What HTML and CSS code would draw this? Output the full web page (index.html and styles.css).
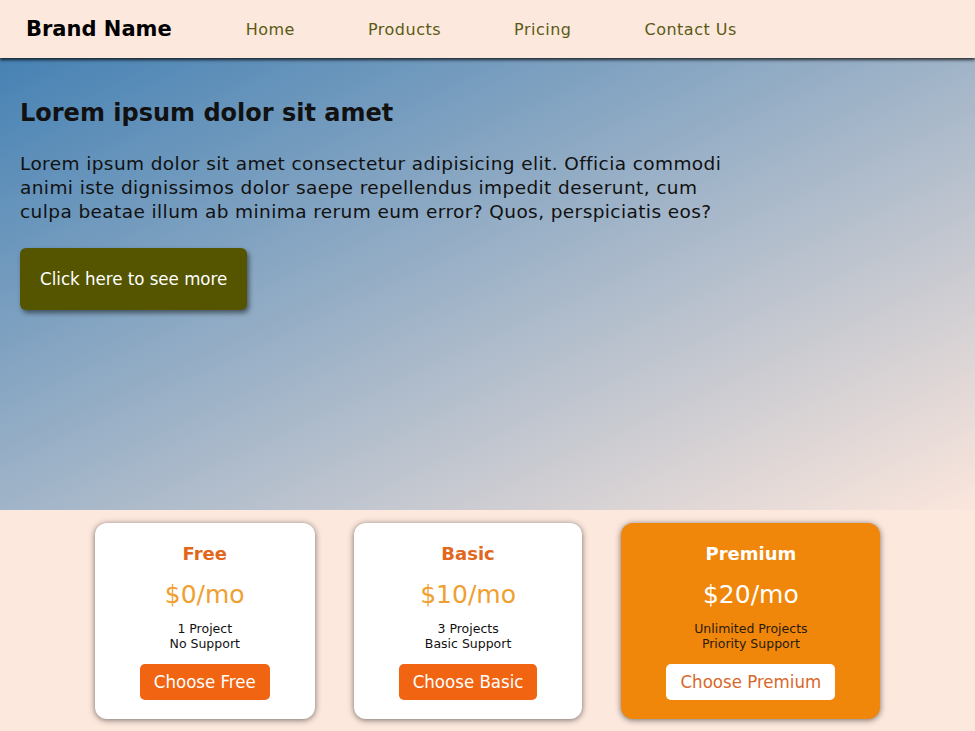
FILE: index.html
```html
<!DOCTYPE html>
<html lang="en">
<head>
<meta charset="utf-8">
<title>Brand Name</title>
<link rel="stylesheet" href="styles.css">
</head>
<body>
<header class="navbar">
  <div class="brand">Brand Name</div>
  <nav class="nav-links">
    <a href="#" class="nav-link">Home</a>
    <a href="#" class="nav-link">Products</a>
    <a href="#" class="nav-link">Pricing</a>
    <a href="#" class="nav-link">Contact Us</a>
  </nav>
</header>
<section class="hero">
  <h1 class="hero-title">Lorem ipsum dolor sit amet</h1>
  <p class="hero-text">Lorem ipsum dolor sit amet consectetur adipisicing elit. Officia commodi animi iste dignissimos dolor saepe repellendus impedit deserunt, cum culpa beatae illum ab minima rerum eum error? Quos, perspiciatis eos?</p>
  <button class="hero-btn">Click here to see more</button>
</section>
<section class="pricing">
  <div class="card">
    <h2 class="card-title">Free</h2>
    <div class="card-price">$0/mo</div>
    <div class="card-features">1 Project<br>No Support</div>
    <button class="card-btn">Choose Free</button>
  </div>
  <div class="card">
    <h2 class="card-title">Basic</h2>
    <div class="card-price">$10/mo</div>
    <div class="card-features">3 Projects<br>Basic Support</div>
    <button class="card-btn">Choose Basic</button>
  </div>
  <div class="card card-premium">
    <h2 class="card-title">Premium</h2>
    <div class="card-price">$20/mo</div>
    <div class="card-features">Unlimited Projects<br>Priority Support</div>
    <button class="card-btn">Choose Premium</button>
  </div>
</section>
</body>
</html>
```
FILE: styles.css
```css
* { box-sizing: border-box; }
html, body { margin: 0; padding: 0; }
body {
  font-family: "DejaVu Sans", Inter, sans-serif;
  background: #fde8dd;
  color: #111;
}
.navbar {
  height: 58px;
  background: #fde8dd;
  display: flex;
  align-items: center;
  padding-left: 26px;
  gap: 74px;
  box-shadow: 0 2px 3px rgba(0,0,0,0.75);
  position: relative;
  z-index: 1;
}
.brand {
  font-weight: 700;
  font-size: 21px;
  color: #000;
}
.nav-links {
  display: flex;
  gap: 73px;
}
.nav-link {
  color: #5a5a14;
  text-decoration: none;
  font-size: 16px;
  letter-spacing: 0.5px;
}
.hero {
  height: 452px;
  padding: 41px 20px 20px;
  background: linear-gradient(to bottom right, #4682b4, #fbe6dc);
}
.hero-title {
  margin: 0;
  font-size: 24px;
  line-height: 29px;
  font-weight: 700;
}
.hero-text {
  margin: 24px 0 24px;
  max-width: 730px;
  font-size: 18.5px;
  line-height: 24px;
  letter-spacing: 0.4px;
}
.hero-btn {
  font-family: "DejaVu Sans Condensed", "DejaVu Sans", sans-serif;
  font-size: 18.5px;
  line-height: 22px;
  color: #fff;
  background: #555500;
  border: none;
  border-radius: 6px;
  padding: 20px 20px;
  box-shadow: 2px 3px 5px rgba(0,0,0,0.5);
}
.pricing {
  display: flex;
  justify-content: center;
  align-items: flex-start;
  gap: 39px;
  padding: 13px 0 11px;
}
.card {
  background: #fff;
  border-radius: 12px;
  padding: 20px 45px 19px;
  text-align: center;
  box-shadow: 0 1px 6px rgba(0,0,0,0.55);
}
.card-title {
  margin: 0;
  font-size: 18px;
  line-height: 22px;
  font-weight: 700;
  color: #e2661c;
}
.card-price {
  margin: 14px 0 10px;
  font-size: 25px;
  line-height: 32px;
  font-weight: 400;
  color: #f0a030;
}
.card-features {
  font-size: 12.5px;
  line-height: 15px;
  margin-bottom: 13px;
  color: #111;
}
.card-btn {
  font-family: "DejaVu Sans Condensed", "DejaVu Sans", sans-serif;
  font-size: 18.5px;
  line-height: 22px;
  color: #fff;
  background: #f06412;
  border: none;
  border-radius: 5px;
  padding: 7px 14px;
}
.card-premium {
  background: #f0870a;
}
.card-premium .card-title,
.card-premium .card-price {
  color: #fff;
}
.card-premium .card-features {
  color: #2a1a0a;
}
.card-premium .card-btn {
  background: #fff;
  color: #d8682a;
}
```
